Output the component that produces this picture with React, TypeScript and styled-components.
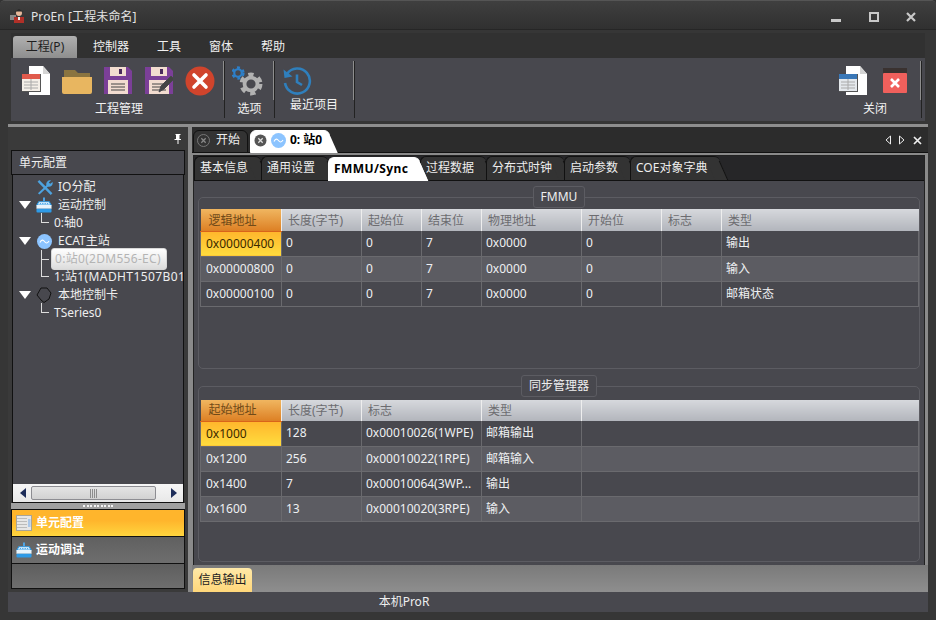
import React from "react";
import styled, { createGlobalStyle } from "styled-components";

const Global = createGlobalStyle`
  html, body { margin: 0; padding: 0; background: #333; }
  * { box-sizing: border-box; }
  body { font-family: "Noto Sans", "Noto Sans CJK SC", sans-serif; font-size: 12px; line-height: 16px; color: #eee; }
`;

const Win = styled.div`
  width: 936px; height: 620px; overflow: hidden; display: flex; flex-direction: column;
  background: #363636; border-top: 1px solid #555; border-radius: 5px 5px 0 0;
`;
const TitleBar = styled.div`
  height: 29px; flex: none; display: flex; align-items: center; padding: 3px 0 0 10px; gap: 6px;
  background: linear-gradient(#3f3f3f, #303030); border-bottom: 1px solid #262626;
  font-size: 12px; color: #e4e4e4;
`;
const TitleText = styled.span` flex: 1; letter-spacing: 0.1px; `;
const WinButtons = styled.div` display: flex; align-items: center; margin: 1px 6px 0 0; `;
const WinBtn = styled.div` width: 37.5px; display: flex; justify-content: center; `;

const Frame = styled.div`
  flex: 1; min-height: 0; display: flex; flex-direction: column; padding: 0 8px 8px;
`;
const Top = styled.div` margin: 3px 3px 0; height: 88px; flex: none; display: flex; flex-direction: column; `;
const MenuBar = styled.div`
  height: 25px; flex: none; display: flex; align-items: flex-end; background: #313131; padding-left: 2px;
`;
const MenuItem = styled.div<{ $on?: boolean; $w: number }>`
  width: ${p => p.$w}px; height: 22px; display: flex; align-items: center; justify-content: center;
  color: ${p => (p.$on ? "#1e1e1e" : "#f0f0f0")}; border-radius: 3px 3px 0 0;
  background: ${p => (p.$on ? "linear-gradient(#b0b0b0,#8e8e8e)" : "transparent")};
`;
const Ribbon = styled.div` flex: 1; display: flex; background: #48484e; `;
const Group = styled.div<{ $w: number; $pl?: number }>`
  width: ${p => p.$w}px; flex: none; padding: 7px 0 0 ${p => p.$pl ?? 0}px; display: flex; flex-direction: column; align-items: center;
`;
const IconRow = styled.div<{ $gap?: number }>` height: 31px; display: flex; gap: ${p => p.$gap ?? 11}px; align-items: center; align-self: flex-start; `;
const GroupLabel = styled.div<{ $mt?: number; $ml?: number }>` margin-top: ${p => p.$mt ?? 5}px; margin-left: ${p => p.$ml ?? 0}px; color: #f2f2f2; white-space: nowrap; `;
const Sep = styled.div`
  width: 2px; flex: none; margin: 3px 0 3px;
  background: linear-gradient(#8e8e8e,#8e8e8e) left top / 1px 39px no-repeat, linear-gradient(#222,#222) right top / 1px 100% no-repeat;
`;
const Grow = styled.div` flex: 1; `;
const TrailGap = styled.div` width: 3px; flex: none; `;

const Workspace = styled.div`
  margin-top: 3px; flex: 1; min-height: 0; display: flex; border-top: 3px solid #8e8e8e;
`;
const Sidebar = styled.div` width: 180px; flex: none; display: flex; flex-direction: column; padding: 0 3px 3px; background: #3a3a3a; `;
const PinRow = styled.div` height: 23px; flex: none; display: flex; justify-content: flex-end; align-items: center; padding-right: 3px; `;
const PanelHeader = styled.div`
  height: 25px; flex: none; display: flex; align-items: center; padding-left: 7px;
  background: #48484e; border: 1px solid #111; color: #eee;
`;
const Tree = styled.div`
  flex: 1; min-height: 0; margin: 0 1px; border: 1px solid #111; border-top: 0; display: flex; flex-direction: column;
  background: #48484e;
`;
const TreeBody = styled.div` flex: 1; min-height: 0; overflow: hidden; padding-top: 3px; `;
const TreeRow = styled.div<{ $pl: number; $wide?: boolean }>`
  height: 18px; display: flex; align-items: center; padding-left: ${p => p.$pl}px; white-space: nowrap; color: #eee; position: relative;
  letter-spacing: ${p => (p.$wide ? "0.4px" : "0")};
`;
const Caret = styled.div`
  width: 0; height: 0; flex: none; border-left: 6px solid transparent; border-right: 6px solid transparent; border-top: 8px solid #fff; margin-right: 5px;
`;
const IconSlot = styled.div<{ $mr?: number }>` width: 16px; height: 16px; flex: none; margin-right: ${p => p.$mr ?? 6}px; display: flex; align-items: center; justify-content: center; `;
const Elbow = styled.div<{ $tall?: boolean; $stub?: boolean }>`
  width: 8px; height: ${p => (p.$tall ? 18 : 10)}px; flex: none; margin-right: 5px; align-self: flex-start;
  margin-top: ${p => (p.$tall ? 0 : -1)}px;
  border-left: 1px solid #ddd; border-bottom: ${p => (p.$stub ? "0" : "1px solid #ddd")};
  ${p => p.$stub && `background: linear-gradient(#ddd,#ddd) left 9px / 8px 1px no-repeat;`}
`;
const Selected = styled.div`
  position: absolute; left: 38px; top: -2px; width: 116px; height: 22px; display: flex; align-items: center; padding-left: 3px; white-space: nowrap; letter-spacing: 0.3px;
  border-radius: 3px; color: #b4b4b4; border: 1px solid #d8d8d8;
  background: linear-gradient(#fefefe,#f0f0f0 45%,#dcdcdc);
`;
const HScroll = styled.div`
  height: 18px; flex: none; display: flex; align-items: center; padding-left: 7px; gap: 5px;
  background: linear-gradient(#f6f6f6,#e8e8e8);
`;
const Thumb = styled.div`
  width: 125px; height: 14px; margin-right: 10px; border: 1px solid #8d8d92; border-radius: 2px; display: flex; justify-content: center; align-items: center; gap: 1px;
  background: linear-gradient(#e4e4e4,#d2d2d2);
`;
const Grip = styled.span` width: 1px; height: 9px; background: #8d8d8d; `;
const Splitter = styled.div`
  height: 6px; flex: none; background: #a0a0a0; display: flex; align-items: center; justify-content: center; gap: 1.5px;
`;
const Dot = styled.span` width: 2px; height: 2px; background: #f4f4f4; `;
const NavItem = styled.div<{ $on?: boolean }>`
  height: 27px; flex: none; display: flex; align-items: center; gap: 4px; padding-left: 4px; border: 1px solid #111; border-bottom: 0;
  color: #fff; font-weight: 700; font-size: 12px;
  background: ${p => (p.$on ? "linear-gradient(#ffb52c 0%,#ffb52c 40%,#ffd53e 100%)" : "linear-gradient(#606060,#6e6e6e)")};
`;
const NavBlank = styled.div`
  flex: none; height: 26px; border: 1px solid #111; background: linear-gradient(#5e5e5e,#6e6e6e);
`;
const Gutter = styled.div` width: 4px; flex: none; background: #8a8a8a; `;

const Main = styled.div` flex: 1; min-width: 0; display: flex; flex-direction: column; background: #8a8a8a; `;
const DocStrip = styled.div`
  height: 26px; flex: none; display: flex; align-items: flex-end; padding: 0 6px 0 1px; background: #2c2c2c; border-bottom: 1px solid #111; gap: 2px;
`;
const DocTab = styled.div<{ $on?: boolean; $w: number }>`
  position: relative; width: ${p => p.$w}px; height: 23px; flex: none; display: flex; align-items: center; padding: 0 0 3px 3px; gap: ${p => (p.$on ? 4 : 6)}px; margin-bottom: -1px; white-space: nowrap;
  border-radius: 6px 6px 0 0; color: ${p => (p.$on ? "#000" : "#eee")}; font-weight: ${p => (p.$on ? 700 : 400)};
  background: ${p => (p.$on ? "#fff" : "#333")}; border: 1px solid ${p => (p.$on ? "#fff" : "#111")};
  ${p => p.$on && `&::after { content: ""; position: absolute; right: -5px; top: 5px; bottom: -1px; width: 12px; transform: skewX(24deg); background: #fff; z-index: 0; }`}
  & > * { position: relative; z-index: 1; }
`;
const DocControls = styled.div` margin-left: auto; display: flex; align-items: center; gap: 8px; height: 24px; `;
const Inner = styled.div` flex: 1; min-height: 0; margin: 2px 3px 0 1px; display: flex; flex-direction: column; background: #48484e; border: 1px solid #222; border-bottom: 0; `;
const TabRow = styled.div`
  height: 25px; flex: none; display: flex; align-items: flex-end; background: #262628; border-bottom: 1px solid #111;
`;
const SubTab = styled.div<{ $on?: boolean; $w: number }>`
  position: relative; width: ${p => p.$w}px; height: 24px; flex: none; display: flex; align-items: center; padding: 0 0 2px 5px; margin-bottom: ${p => (p.$on ? -1 : 0)}px; white-space: nowrap;
  border-radius: 6px 6px 0 0; z-index: ${p => (p.$on ? 2 : 1)}; letter-spacing: ${p => (p.$on ? "0.4px" : "0")};
  color: ${p => (p.$on ? "#000" : "#eee")}; font-weight: ${p => (p.$on ? 700 : 400)};
  background: ${p => (p.$on ? "#fff" : "#333")}; border: 1px solid ${p => (p.$on ? "#fff" : "#111")}; border-bottom: 0; border-right: 0;
  &::after {
    content: ""; position: absolute; right: -4px; bottom: 0; top: 4px; width: 12px; transform: skewX(24deg);
    background: ${p => (p.$on ? "#fff" : "#333")}; border-right: 1px solid ${p => (p.$on ? "#fff" : "#111")}; z-index: -1;
  }
`;
const Content = styled.div` flex: 1; min-height: 0; display: flex; flex-direction: column; gap: 6px; padding: 5px 4px 0; `;
const Box = styled.fieldset<{ $h: number; $pt: number }>`
  height: ${p => p.$h}px; flex: none; margin: 0; padding: ${p => p.$pt}px 1px 0; min-width: 0; border: 1px solid #5c5c62; border-radius: 5px;
`;
const Legend = styled.legend`
  margin: 0 auto; height: 22px; padding: 0 7px; line-height: 19px; border: 1px solid #5c5c62; border-radius: 3px; background: #48484e; color: #eee;
`;
const Table = styled.table` width: 718px; table-layout: fixed; border-collapse: collapse; `;
const Th = styled.th<{ $on?: boolean; $tall?: boolean }>`
  height: ${p => (p.$tall ? 21 : 22)}px; padding: ${p => (p.$tall ? 0 : 2)}px 0 0 ${p => (p.$on ? 8 : 6)}px; text-align: left; font-weight: 400; white-space: nowrap; border-right: 1px solid #eee;
  color: ${p => (p.$on ? "#704a18" : "#6c6c70")};
  background: ${p => (p.$on ? "linear-gradient(#f0b660,#dd8024)" : "linear-gradient(#d6d8dc,#b2b5bc)")};
  ${p => p.$on && "border-bottom: 1px solid #d9641a;"}
  &:last-child { border-right: 0; }
`;
const Td = styled.td<{ $on?: boolean; $alt?: boolean; $first?: boolean }>`
  height: 25px; padding: 0 0 0 ${p => (p.$first ? 5 : 4)}px; white-space: nowrap; overflow: hidden; text-overflow: ellipsis;
  border: 1px solid #6a6a6e; border-width: 0 1px 1px 1px;
  color: ${p => (p.$on ? "#3a2a00" : "#eef0f2")};
  background: ${p => (p.$on ? "linear-gradient(#ffb62c,#ffdc3e)" : p.$alt ? "#5c5c62" : "#48484e")};
`;
const BottomStrip = styled.div`
  height: 27px; flex: none; display: flex; align-items: flex-end; padding-left: 1px; background: linear-gradient(#7a7a7a,#8e8e8e);
`;
const OutTab = styled.div`
  width: 59px; height: 24px; display: flex; align-items: center; justify-content: center; border-radius: 4px 4px 0 0; color: #222; background: linear-gradient(#ffe9a8,#ffd77a);
`;
const Status = styled.div`
  height: 20px; flex: none; display: flex; align-items: center; justify-content: center; background: #48484e; color: #eee; padding-right: 128px;
`;

const DocIcon = ({ head, body }: { head: string; body: string }) => (
  <svg width="30" height="31" viewBox="0 0 30 31">
    <path d="M8 1h14l7 8v21H8z" fill="#fff" />
    <path d="M22 1l7 8h-7z" fill="#d4d4d4" />
    <rect x="1" y="9" width="19" height="18" fill="#555" />
    <rect x="1" y="9" width="18" height="17" fill={body} />
    <rect x="1" y="9" width="18" height="5" fill={head} />
    <path d="M3 17h14M3 20h14M3 23h14M10 14v11" stroke="#aaa" strokeWidth="1" />
  </svg>
);
const Folder = () => (
  <svg width="30" height="27" viewBox="0 0 30 27" style={{ marginTop: 2 }}>
    <path d="M2 2h11l3 3h12v5H2z" fill="#8a7440" />
    <path d="M0 9h30v15a2 2 0 0 1-2 2H2a2 2 0 0 1-2-2z" fill="#e8b660" />
  </svg>
);
const Floppy = ({ pen }: { pen?: boolean }) => (
  <svg width="30" height="29" viewBox="0 0 30 29">
    <path d="M1 1h24l4 4v23H1z" fill="#7b3f98" />
    <rect x="7" y="1" width="16" height="9" fill="#f2dcd0" />
    <rect x="16" y="3" width="3" height="5" fill="#4a2a5c" />
    <rect x="5" y="14" width="20" height="14" fill="#f2dcd0" />
    <path d="M8 18h14M8 21h14M8 24h14" stroke="#444" strokeWidth="1.2" />
    {pen && <path d="M15 26l2-6L27 10l3 3L20 23z" fill="#444" stroke="#48484e" strokeWidth="1" />}
  </svg>
);
const XCircle = () => (
  <svg width="30" height="30" viewBox="0 0 30 30">
    <circle cx="15" cy="15" r="14.5" fill="#d0442c" />
    <path d="M9 9l12 12M21 9L9 21" stroke="#fff" strokeWidth="3.6" strokeLinecap="round" />
  </svg>
);
const Gear = ({ x, y, r, c }: { x: number; y: number; r: number; c: string }) => (
  <g>
    <circle cx={x} cy={y} r={r} fill="none" stroke={c} strokeWidth={r * 0.55} strokeDasharray={`${r * 0.55} ${r * 0.55}`} />
    <circle cx={x} cy={y} r={r * 0.72} fill="none" stroke={c} strokeWidth={r * 0.42} />
  </g>
);
const Gears = () => (
  <svg width="31" height="30" viewBox="0 0 31 30">
    <Gear x={6} y={7} r={5.2} c="#2d7fc8" />
    <Gear x={19} y={18} r={9} c="#b2b2b2" />
  </svg>
);
const History = () => (
  <svg width="30" height="30" viewBox="0 0 30 30" fill="none" stroke="#2f7fbc" strokeWidth="2.6">
    <path d="M5 8a12.500 12.500 0 1 1-2 9" />
    <path d="M1.500 3.500l1 8.500 8-1.500z" fill="#2f7fbc" stroke="none" />
    <path d="M15 8.500V16l5 3" />
  </svg>
);
const RedBox = () => (
  <svg width="24" height="25" viewBox="0 0 24 25">
    <rect x="0" y="0" width="24" height="6" fill="#3a3230" />
    <rect x="0" y="5" width="24" height="20" rx="1" fill="#f0605c" />
    <path d="M8 11l8 8M16 11l-8 8" stroke="#fff" strokeWidth="2.6" />
  </svg>
);
const Tools = () => (
  <svg width="17" height="17" viewBox="0 0 17 17">
    <path d="M1.500 1.500l14 14" stroke="#4da3e0" strokeWidth="2.6" />
    <path d="M15 1a4 4 0 0 0-5 5L1 14.500 2.600 16 11.500 7.600a4 4 0 0 0 5-5l-2.400 2-1.600-1.500z" fill="#4da3e0" />
  </svg>
);
const Cake = () => (
  <svg width="17" height="16" viewBox="0 0 17 16">
    <path d="M8.500 0v4" stroke="#4da8ec" strokeWidth="2" />
    <path d="M3 4.500h11l2 3.500H1z" fill="#f4fbff" stroke="#2e9ae6" strokeWidth="1.200" />
    <path d="M4 6.500h9" stroke="#2e9ae6" strokeDasharray="1.500 1" />
    <rect x="0.500" y="8" width="16" height="4" fill="#e8f4fc" />
    <rect x="0.500" y="12" width="16" height="4" rx="1" fill="#2e9ae6" />
  </svg>
);
const Wave = ({ size = 15 }: { size?: number }) => (
  <svg width={size} height={size} viewBox="0 0 15 15">
    <circle cx="7.500" cy="7.500" r="7.500" fill="#8cc4ff" />
    <path d="M3 8.500c1.600-3 3-3 4.500-1s3 2 4.500-.5" fill="none" stroke="#fff" strokeWidth="1.100" />
  </svg>
);
const Ring = () => (
  <svg width="16" height="16" viewBox="0 0 16 16">
    <path d="M5 1h6l4 5-2 6-5 3.500-3-2.500-4-5z" fill="none" stroke="#111" strokeWidth="1" />
  </svg>
);
const CloseDot = ({ dark }: { dark?: boolean }) => (
  <svg width="13" height="13" viewBox="0 0 13 13">
    <circle cx="6.500" cy="6.500" r="6" fill={dark ? "#555" : "none"} stroke={dark ? "none" : "#777"} />
    <path d="M4.300 4.300l4.400 4.400M8.700 4.300L4.300 8.700" stroke={dark ? "#ddd" : "#888"} strokeWidth="1.300" />
  </svg>
);
const AppLogo = () => (
  <svg width="15" height="15" viewBox="0 0 15 15">
    <rect x="0" y="6" width="6" height="5" fill="#888" />
    <circle cx="9" cy="4" r="3" fill="#e8b89a" />
    <path d="M4.500 2.500h9L9 0z" fill="#2a2a2a" />
    <path d="M4 8h10v6H4z" fill="#b03028" />
    <path d="M8 8h2v3H8z" fill="#eee" />
  </svg>
);
const Arrow = ({ left, fill = "#1e2e5a" }: { left?: boolean; fill?: string }) => (
  <svg width="6" height="10" viewBox="0 0 6 10">
    <path d={left ? "M6 0v10L0 5z" : "M0 0v10l6-5z"} fill={fill} />
  </svg>
);
const HollowArrow = ({ left }: { left?: boolean }) => (
  <svg width="6" height="10" viewBox="0 0 6 10">
    <path d={left ? "M5.500 1v8L1 5z" : "M.5 1v8L5 5z"} fill="none" stroke="#eee" />
  </svg>
);
const SmallX = () => (
  <svg width="9" height="9" viewBox="0 0 9 9"><path d="M1 1l7 7M8 1L1 8" stroke="#eee" strokeWidth="1.700" /></svg>
);
const Pin = () => (
  <svg width="8" height="10" viewBox="0 0 8 10"><path d="M1.500 0h5v1h-1v4h1.500v1H4.500v4h-1V6H.5V5H2V1H1.500z" fill="#fff" /></svg>
);
const Ledger = () => (
  <svg width="16" height="16" viewBox="0 0 16 16">
    <rect x="0.500" y="0.500" width="15" height="15" fill="#e6e6e6" stroke="#a8a498" />
    <path d="M1 3.500h10M1 6.500h10M1 9.500h10M1 12.500h10" stroke="#bbb" />
    <rect x="12" y="4" width="2.500" height="8" fill="#a9c6e8" />
  </svg>
);

const fmmuCols = [81, 80, 60, 60, 100, 80, 60, 197];
const fmmuHead = ["逻辑地址", "长度(字节)", "起始位", "结束位", "物理地址", "开始位", "标志", "类型"];
const fmmuRows = [
  ["0x00000400", "0", "0", "7", "0x0000", "0", "", "输出"],
  ["0x00000800", "0", "0", "7", "0x0000", "0", "", "输入"],
  ["0x00000100", "0", "0", "7", "0x0000", "0", "", "邮箱状态"],
];
const syncCols = [81, 80, 120, 100, 337];
const syncHead = ["起始地址", "长度(字节)", "标志", "类型", ""];
const syncRows = [
  ["0x1000", "128", "0x00010026(1WPE)", "邮箱输出", ""],
  ["0x1200", "256", "0x00010022(1RPE)", "邮箱输入", ""],
  ["0x1400", "7", "0x00010064(3WP...", "输出", ""],
  ["0x1600", "13", "0x00010020(3RPE)", "输入", ""],
];

const DataTable = ({ cols, head, rows, tall }: { cols: number[]; head: string[]; rows: string[][]; tall?: boolean }) => (
  <Table>
    <colgroup>{cols.map((c, i) => <col key={i} width={c} />)}</colgroup>
    <thead>
      <tr>{head.map((h, i) => <Th key={i} $on={i === 0} $tall={tall}>{h}</Th>)}</tr>
    </thead>
    <tbody>
      {rows.map((r, ri) => (
        <tr key={ri}>
          {r.map((c, i) => <Td key={i} $first={i === 0} $on={ri === 0 && i === 0} $alt={ri % 2 === 1}>{c}</Td>)}
        </tr>
      ))}
    </tbody>
  </Table>
);

export default function App() {
  return (
    <Win>
      <Global />
      <TitleBar>
        <AppLogo />
        <TitleText>ProEn [工程未命名]</TitleText>
        <WinButtons>
          <WinBtn>
            <svg width="10" height="14" viewBox="0 0 10 14"><rect y="9" width="10" height="3" fill="#c8c8c8" /></svg>
          </WinBtn>
          <WinBtn>
            <svg width="10" height="10" viewBox="0 0 10 10"><rect x="1" y="1" width="8" height="8" fill="none" stroke="#c8c8c8" strokeWidth="2" /></svg>
          </WinBtn>
          <WinBtn>
            <svg width="10" height="10" viewBox="0 0 10 10"><path d="M1 1l8 8M9 1l-8 8" stroke="#c8c8c8" strokeWidth="2.200" /></svg>
          </WinBtn>
        </WinButtons>
      </TitleBar>
      <Frame>
        <Top>
          <MenuBar>
            <MenuItem $on $w={64}>工程(P)</MenuItem>
            <MenuItem $w={16} />
            <MenuItem $w={36}>控制器</MenuItem>
            <MenuItem $w={28} />
            <MenuItem $w={24}>工具</MenuItem>
            <MenuItem $w={28} />
            <MenuItem $w={24}>窗体</MenuItem>
            <MenuItem $w={28} />
            <MenuItem $w={24}>帮助</MenuItem>
          </MenuBar>
          <Ribbon>
            <Group $w={212} $pl={10}>
              <IconRow>
                <DocIcon head="#e05a4c" body="#f4efe8" />
                <Folder />
                <Floppy />
                <Floppy pen />
                <XCircle />
              </IconRow>
              <GroupLabel $ml={-6}>工程管理</GroupLabel>
            </Group>
            <Sep />
            <Group $w={48} $pl={7}>
              <IconRow><Gears /></IconRow>
              <GroupLabel $ml={-6}>选项</GroupLabel>
            </Group>
            <Sep />
            <Group $w={78} $pl={7}>
              <IconRow><History /></IconRow>
              <GroupLabel $mt={1} $ml={-7}>最近项目</GroupLabel>
            </Group>
            <Sep />
            <Grow />
            <Group $w={82}>
              <IconRow $gap={15}>
                <DocIcon head="#3a78b8" body="#e4e8ec" />
                <RedBox />
              </IconRow>
              <GroupLabel $ml={-8}>关闭</GroupLabel>
            </Group>
            <Sep />
            <TrailGap />
          </Ribbon>
        </Top>
        <Workspace>
          <Sidebar>
            <PinRow><Pin /></PinRow>
            <PanelHeader>单元配置</PanelHeader>
            <Tree>
              <TreeBody>
                <TreeRow $pl={24}><IconSlot $mr={5}><Tools /></IconSlot>IO分配</TreeRow>
                <TreeRow $pl={6}><Caret /><IconSlot><Cake /></IconSlot>运动控制</TreeRow>
                <TreeRow $pl={28}><Elbow />0:轴0</TreeRow>
                <TreeRow $pl={6}><Caret /><IconSlot><Wave /></IconSlot>ECAT主站</TreeRow>
                <TreeRow $pl={28}><Elbow $tall $stub /><Selected>0:站0(2DM556-EC)</Selected></TreeRow>
                <TreeRow $pl={28} $wide><Elbow />1:站1(MADHT1507B01</TreeRow>
                <TreeRow $pl={6}><Caret /><IconSlot><Ring /></IconSlot>本地控制卡</TreeRow>
                <TreeRow $pl={28}><Elbow />TSeries0</TreeRow>
              </TreeBody>
              <HScroll>
                <Arrow left />
                <Thumb><Grip /><Grip /><Grip /><Grip /></Thumb>
                <Arrow />
              </HScroll>
            </Tree>
            <Splitter>{Array.from({ length: 9 }).map((_, i) => <Dot key={i} />)}</Splitter>
            <NavItem $on><Ledger />单元配置</NavItem>
            <NavItem><IconSlot $mr={0}><Cake /></IconSlot>运动调试</NavItem>
            <NavBlank />
          </Sidebar>
          <Gutter />
          <Main>
            <DocStrip>
              <DocTab $w={55}><CloseDot /><span>开始</span></DocTab>
              <DocTab $on $w={80}><CloseDot dark /><Wave size={15} /><span>0: 站0</span></DocTab>
              <DocControls>
                <HollowArrow left />
                <HollowArrow />
                <SmallX />
              </DocControls>
            </DocStrip>
            <Inner>
              <TabRow>
                <SubTab $w={67}>基本信息</SubTab>
                <SubTab $w={67}>通用设置</SubTab>
                <SubTab $w={92} $on>FMMU/Sync</SubTab>
                <SubTab $w={66}>过程数据</SubTab>
                <SubTab $w={78}>分布式时钟</SubTab>
                <SubTab $w={66}>启动参数</SubTab>
                <SubTab $w={90}>COE对象字典</SubTab>
              </TabRow>
              <Content>
                <Box $h={183} $pt={1}>
                  <Legend>FMMU</Legend>
                  <DataTable cols={fmmuCols} head={fmmuHead} rows={fmmuRows} />
                </Box>
                <Box $h={187} $pt={3}>
                  <Legend>同步管理器</Legend>
                  <DataTable cols={syncCols} head={syncHead} rows={syncRows} tall />
                </Box>
              </Content>
            </Inner>
            <BottomStrip><OutTab>信息输出</OutTab></BottomStrip>
          </Main>
        </Workspace>
        <Status>本机ProR</Status>
      </Frame>
    </Win>
  );
}
